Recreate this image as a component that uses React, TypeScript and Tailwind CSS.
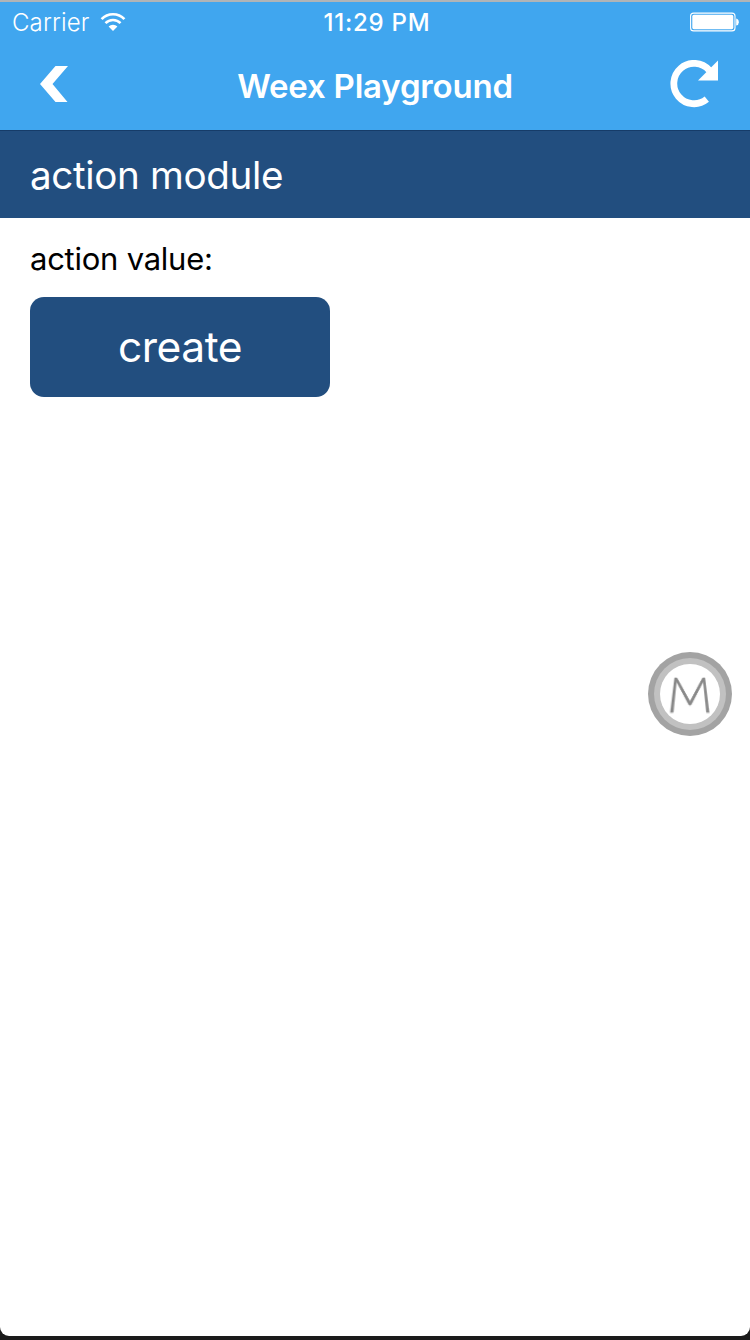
function WifiIcon() {
  return (
    <svg className="ml-[10px] h-[20px] w-[26px]" viewBox="0 0 26 20" fill="none" stroke="white">
      <path d="M1.6 7.2 A15.6 15.6 0 0 1 24.4 7.2" strokeWidth="2.7" />
      <path d="M5.5 11.2 A10.2 10.2 0 0 1 20.5 11.2" strokeWidth="2.5" />
      <path d="M8.6 14.6 A6.1 6.1 0 0 1 17.4 14.6 L13 19 Z" fill="white" stroke="none" />
    </svg>
  );
}

function BatteryIcon() {
  return (
    <svg className="h-[20px] w-[50px]" viewBox="0 0 50 20">
      <rect x="0.6" y="1.1" width="44.4" height="17.8" rx="3" fill="none" stroke="white" strokeWidth="1.1" />
      <rect x="2.3" y="2.8" width="41" height="14.4" rx="1.6" fill="white" />
      <path d="M46.2 6.6 Q48.8 7.2 48.8 10.2 Q48.8 13 46.2 13.6 Z" fill="white" />
    </svg>
  );
}

function BackIcon() {
  return (
    <svg className="h-[36px] w-[28px]" viewBox="0 0 28 36" fill="white">
      <path d="M15.5 0 H28 L12.5 18 L27.5 36 H15.5 L0 18 Z" />
    </svg>
  );
}

function ReloadIcon() {
  return (
    <svg className="h-[48px] w-[49px]" viewBox="0 0 49 48">
      <path d="M39.2 10.2 A20.2 20.2 0 1 0 36.8 39.2" fill="none" stroke="white" strokeWidth="6.8" />
      <path d="M48 0.5 V20.5 H28 Z" fill="white" />
    </svg>
  );
}

export default function App() {
  return (
    <div className="h-[1340px] w-[750px] bg-[#1b1b1b] font-['Inter',sans-serif]">
      <div className="relative flex h-[1336px] flex-col overflow-hidden rounded-b-[9px] bg-white">
        <header className="flex h-[131px] flex-col border-t-2 border-b border-t-[#b0b4b7] border-b-[#163c69] bg-[#40a6ef] text-white">
          <div className="grid h-[40px] grid-cols-3 items-center pr-[10px] pl-[12px]">
            <div className="flex items-center">
              <span className="pt-[2px] text-[24px] leading-none font-light tracking-[0.15px]">Carrier</span>
              <WifiIcon />
            </div>
            <span className="pt-[2px] pl-[2px] text-center text-[24px] leading-none font-medium tracking-[0.75px]">11:29 PM</span>
            <div className="flex justify-end">
              <BatteryIcon />
            </div>
          </div>
          <div className="grid h-[84px] grid-cols-[100px_1fr_100px] items-center pr-[31px] pl-[40px]">
            <BackIcon />
            <h1 className="pt-[5px] pr-[9px] text-center text-[33px] leading-none font-semibold tracking-[-0.2px]">Weex Playground</h1>
            <div className="flex justify-end">
              <ReloadIcon />
            </div>
          </div>
        </header>
        <div className="flex h-[87px] items-center bg-[#224e7f] pl-[30px]">
          <h2 className="pt-[2px] text-[38.6px] leading-none tracking-[-0.35px] text-white">action module</h2>
        </div>
        <main className="flex flex-col items-start pt-[22px] pl-[30px]">
          <p className="text-[31px] leading-[38px] tracking-[-0.25px] text-black">action value:</p>
          <button className="mt-[19px] flex h-[100px] w-[300px] items-center justify-center rounded-[14px] bg-[#224e7f] pt-[1px] text-[42.5px] leading-none tracking-[-0.5px] text-white">
            create
          </button>
        </main>
        <div className="absolute top-[652px] left-[648px] flex size-[84px] items-center justify-center rounded-full bg-[#a3a3a3]">
          <div className="flex size-[72px] items-center justify-center rounded-full bg-[#c1c1c1]">
            <div className="flex size-[60px] items-center justify-center rounded-full bg-white">
              <span className="[transform:translateY(-2px)_scaleY(1.14)_perspective(70px)_rotateX(30deg)] font-['Lato',sans-serif] text-[48px] leading-none font-light text-[#888888] [-webkit-text-stroke:0.6px_#888888]">
                M
              </span>
            </div>
          </div>
        </div>
      </div>
    </div>
  );
}
